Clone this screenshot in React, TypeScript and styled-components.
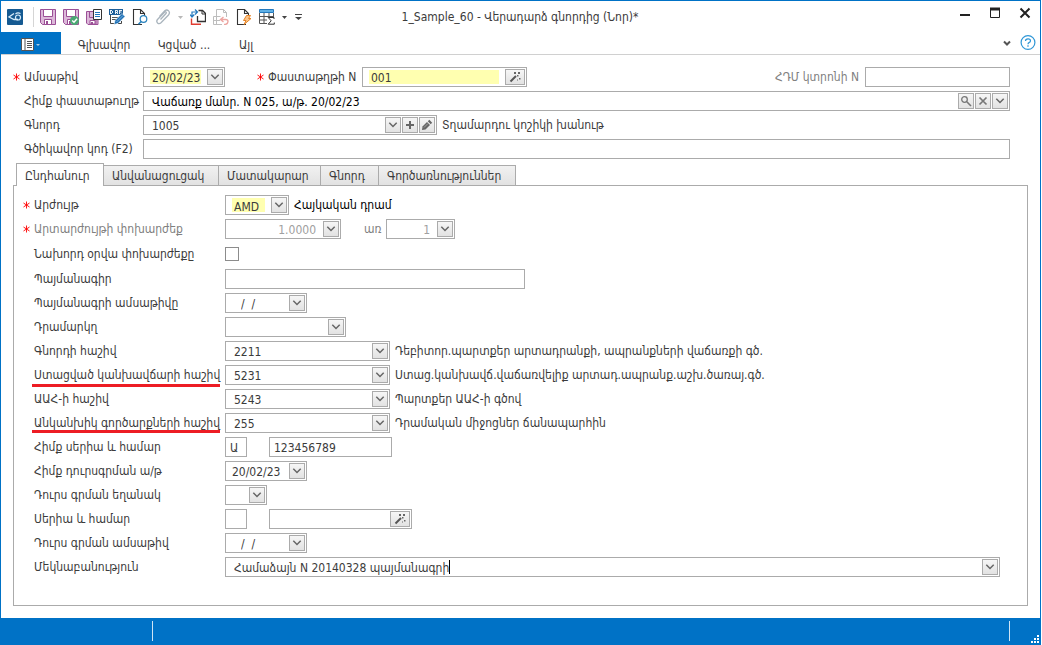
import React, { useRef } from "react";
import styled, { createGlobalStyle, css } from "styled-components";

const blue = "#0072c6";
const line = "#ababab";
const ink = "#3b3b3b";
const muted = "#808080";
const yellow = "#ffffb0";

const GlobalStyle = createGlobalStyle`
  * { box-sizing: border-box; }
  body { margin: 0; background: #fff; }
  body, button, input, select {
    font-family: "DejaVu Sans Condensed", "DejaVu Sans", sans-serif;
    font-size: 12px;
    line-height: 16px;
    color: ${ink};
  }
  button, input, select { margin: 0; padding: 0; border: 0; outline: 0; background: none; border-radius: 0; }
`;

const Window = styled.div`
  display: flex;
  flex-direction: column;
  min-height: 100vh;
  margin-right: 1px;
  border: 1px solid ${blue};
  border-bottom: 0;
`;

/* ---------- caption and ribbon ---------- */

const Caption = styled.header`
  display: grid;
  grid-template-columns: 1fr auto 1fr;
  align-items: center;
  height: 31px;
  padding: 0 7px 0 6px;
`;

const QuickBar = styled.div`
  display: flex;
  align-items: center;
  gap: 7px;
`;

const IconButton = styled.button<{ $w?: number }>`
  display: block;
  width: ${(p) => p.$w ?? 16}px;
  height: 16px;
  svg { display: block; }
`;

const BarDivider = styled.span`
  width: 1px;
  height: 20px;
  margin: 0 -1px 0 3px;
  background: #d5d5d5;
`;

const Title = styled.h1`
  margin: 0;
  font-size: 12px;
  font-weight: 400;
  line-height: 16px;
  white-space: nowrap;
`;

const WindowButtons = styled.div`
  display: flex;
  justify-content: flex-end;
  gap: 14px;
  margin-top: -7px;
`;

const Ribbon = styled.nav`
  display: flex;
  align-items: center;
  height: 23px;
  border-bottom: 1px solid #d0d0d0;
`;

const FileButton = styled.button`
  width: 60px;
  height: 22px;
  background: ${blue};
  svg { display: block; }
`;

const RibbonTab = styled.button<{ $w: number }>`
  width: ${(p) => p.$w}px;
  height: 22px;
  padding-top: 4px;
  text-align: center;
  white-space: nowrap;
`;

const RibbonTabs = styled.div`
  display: flex;
  flex: 1;
  padding-left: 4px;
`;

const RibbonTools = styled.div`
  display: flex;
  align-items: center;
  gap: 8px;
  padding-right: 4px;
`;

/* ---------- form parts ---------- */

const Rows = styled.div`
  display: flex;
  flex-direction: column;
  gap: 4px;
`;

const HeaderRows = styled(Rows)`
  padding: 12px 30px 4px 12px;
`;

const Row = styled.div<{ $h?: number }>`
  display: flex;
  align-items: center;
  height: ${(p) => p.$h ?? 20}px;
`;

const Label = styled.label<{ $w?: number; $muted?: boolean; $mark?: "near" | "below" }>`
  position: relative;
  flex: none;
  width: ${(p) => (p.$w ? `${p.$w}px` : "auto")};
  line-height: 20px;
  white-space: nowrap;
  color: ${(p) => (p.$muted ? muted : ink)};
  ${(p) =>
    p.$mark &&
    css`
      &::after {
        content: "";
        position: absolute;
        left: -2px;
        right: 5px;
        bottom: ${p.$mark === "near" ? 0 : -2}px;
        height: 3px;
        background: #ed1c24;
      }
    `}
`;

const Star = styled.span`
  flex: none;
  width: 11px;
  height: 20px;
  svg { display: block; margin-top: 6px; }
`;

const Box = styled.div<{ $w?: number }>`
  display: flex;
  align-items: center;
  gap: 1px;
  flex: ${(p) => (p.$w ? "none" : "1")};
  width: ${(p) => (p.$w ? `${p.$w}px` : "auto")};
  min-width: 0;
  height: 20px;
  padding: 1px;
  border: 1px solid ${line};
  background: #fff;
`;

const entry = css<{ $pad?: number; $muted?: boolean; $right?: boolean; $strong?: boolean }>`
  flex: 1;
  min-width: 0;
  width: 0;
  height: 16px;
  padding-top: 1px;
  padding-left: ${(p) => p.$pad ?? 7}px;
  padding-right: ${(p) => (p.$right ? 6 : 0)}px;
  color: ${(p) => (p.$strong ? "#000" : p.$muted ? "#a0a0a0" : ink)};
  text-align: ${(p) => (p.$right ? "right" : "left")};
  opacity: 1;
`;

const required = css`
  height: 14px;
  padding-left: 2px;
  margin: 0 5px;
  background: ${yellow};
`;

const Entry = styled.input<{ $pad?: number; $muted?: boolean; $right?: boolean; $strong?: boolean; $required?: boolean }>`
  ${entry}
  ${(p) => p.$required && required}
`;

const Picker = styled.select<{ $pad?: number; $muted?: boolean; $required?: boolean }>`
  appearance: none;
  ${entry}
  ${(p) => p.$required && required}
`;

const MiniButton = styled.button<{ $w?: number }>`
  flex: none;
  display: flex;
  align-items: center;
  justify-content: center;
  width: ${(p) => p.$w ?? 16}px;
  height: 16px;
  border: 1px solid ${line};
  background: linear-gradient(#f6f6f6, #e2e2e2);
`;

const Note = styled.span<{ $strong?: boolean }>`
  padding-left: 5px;
  line-height: 20px;
  white-space: nowrap;
  color: ${(p) => (p.$strong ? "#000" : ink)};
`;

const Gap = styled.span<{ $w: number }>`
  flex: none;
  width: ${(p) => p.$w}px;
`;

const Push = styled.span`
  flex: 1;
`;

const Tick = styled.input`
  appearance: none;
  width: 14px;
  height: 14px;
  margin: 0;
  border: 1px solid #8c8c8c;
  background: #fff;
`;

const Caret = styled.span`
  flex: none;
  width: 1px;
  height: 14px;
  margin-left: -1px;
  background: #000;
`;

const CommentText = styled(Entry)`
  flex: none;
  width: auto;
  field-sizing: content;
`;

/* ---------- tabs ---------- */

const TabStrip = styled.div`
  display: flex;
  align-items: flex-end;
  height: 22px;
  padding-left: 15px;
`;

const Tab = styled.button<{ $w: number; $active?: boolean }>`
  width: ${(p) => p.$w}px;
  height: ${(p) => (p.$active ? 23 : 20)}px;
  padding-top: ${(p) => (p.$active ? 2 : 0)}px;
  padding-left: 8px;
  text-align: left;
  white-space: nowrap;
  border: 1px solid ${line};
  border-bottom: 0;
  border-left-width: ${(p) => (p.$active ? 1 : 0)}px;
  background: ${(p) => (p.$active ? "#fff" : "linear-gradient(#f1f1f1, #e2e2e2)")};
  margin-bottom: ${(p) => (p.$active ? -1 : 0)}px;
  z-index: ${(p) => (p.$active ? 1 : 0)};
`;

const Panel = styled.section`
  flex: 1;
  margin: 0 12px 12px;
  padding: 9px 27px 28px 9px;
  border: 1px solid ${line};
`;

/* ---------- status bar ---------- */

const StatusBar = styled.footer`
  display: flex;
  justify-content: space-between;
  height: 27px;
  padding: 3px 0 4px 151px;
  background: ${blue};
`;

const StatusDivider = styled.span`
  width: 1px;
  height: 20px;
  background: #cfe4f5;
`;

const StatusEnd = styled.div`
  display: flex;
  align-items: flex-start;
  gap: 20px;
  svg { margin-top: 14px; }
`;

/* ---------- drawings ---------- */

const Svg = ({ w = 16, h = 16, children }: { w?: number; h?: number; children: React.ReactNode }) => (
  <svg width={w} height={h} viewBox={`0 0 ${w} ${h}`} fill="none" aria-hidden="true">
    {children}
  </svg>
);

const Chevron = () => (
  <Svg w={10} h={8}>
    <path d="M1.300 1.800L5 5.500L8.700 1.800" stroke="#666" strokeWidth="1.500" />
  </Svg>
);

const Wand = () => (
  <Svg w={12} h={12}>
    <path d="M1.500 10.500L7 5" stroke="#555" strokeWidth="2" />
    <path d="M5 1h2v2H5zM9 1h2v2H9zM8 4h1.500v1.500H8zM10 7h1.500v1.500H10zM8 8.500h1v1H8z" fill="#666" />
  </Svg>
);

const Lens = () => (
  <Svg w={12} h={12}>
    <circle cx="4.500" cy="4.500" r="2.800" stroke="#777" strokeWidth="1.300" />
    <path d="M6.800 6.800L11 11" stroke="#777" strokeWidth="1.600" />
  </Svg>
);

const Clear = () => (
  <Svg w={10} h={10}>
    <path d="M1.500 1.500L8.500 8.500M8.500 1.500L1.500 8.500" stroke="#777" strokeWidth="1.700" />
  </Svg>
);

const Plus = () => (
  <Svg w={10} h={10}>
    <path d="M5 1V9M1 5H9" stroke="#666" strokeWidth="2" />
  </Svg>
);

const Pencil = () => (
  <Svg w={12} h={12}>
    <path d="M1 11L1.500 7.500L6 3L9 6L4.500 10.500Z" fill="#666" />
    <path d="M6.800 2.300L8.300 .8L11.200 3.700L9.700 5.200Z" fill="#666" />
    <path d="M3 8.500L7 4.500" stroke="#bbb" strokeWidth=".7" />
  </Svg>
);

const Asterisk = () => (
  <Svg w={7} h={8}>
    <path d="M3.500 .5V7.500M.5 2L6.500 6M6.500 2L.5 6" stroke="#f00" strokeWidth=".9" />
  </Svg>
);

const purple = "#9b4f96";
const lilac = "#dcb8d9";
const Floppy = ({ small }: { small?: boolean }) => (
  <g>
    <path d={small ? "M.5 2.500H8V8H12V15.500H2L.5 14Z" : "M.5 .5H15.500V15.500H2.500L.5 13.500Z"} fill={lilac} stroke={purple} />
    <path d={small ? "M3.500 2.500V8.500H10V15" : "M3.500 .5H12.500V7.500H3.500Z"} fill={small ? "none" : "#fff"} stroke={purple} />
    <path d={small ? "M4 11.500H9V15H4Z" : "M4.500 10.500H11.500V15.500H4.500Z"} fill="#fff" stroke={purple} />
    <path d={small ? "M5 13H7V15H5Z" : "M6 12H8V15H6Z"} fill={purple} />
  </g>
);

const Page = () => (
  <path d="M10 15.500H1.500V.5H8.500L12.500 4.500V8M8.500 .5V4.500H12.500" stroke="#333" strokeWidth="1.100" fill="#fff" />
);

const SmallArrow = ({ tone = "#444" }: { tone?: string }) => (
  <Svg w={5} h={16}>
    <path d="M0 7H5L2.500 10Z" fill={tone} />
  </Svg>
);

const quickActions: { name: string; w?: number; icon: React.ReactNode }[] = [
  { name: "Save", icon: <Svg><Floppy /></Svg> },
  {
    name: "Save and approve",
    icon: (
      <Svg>
        <Floppy />
        <circle cx="11.500" cy="11.500" r="4.500" fill="#4aa873" />
        <path d="M9.200 11.500L11 13.300L14 9.800" stroke="#fff" strokeWidth="1.400" />
      </Svg>
    ),
  },
  {
    name: "Save and new",
    icon: (
      <Svg>
        <Floppy small />
        <path d="M7.500 .5H15.500V10.500H7.500Z" fill="#fff" stroke="#333" />
        <path d="M9 3.500H14M9 5.500H14M9 7.500H14" stroke="#2479bd" />
      </Svg>
    ),
  },
  {
    name: "Save draft",
    icon: (
      <Svg>
        <path d="M1.500 6V14.500H7M12.500 12V14.500H9" stroke="#444" />
        <path d="M0 0H14V6H0Z" fill="#1e5f99" />
        <path d="M1.500 1V5M1.500 1.500H3M1.500 4.500H3M3.500 2V4M6.500 1V5M7 1.500H8.500V3.500H7M8.500 4V5M10.500 1V5M11 1.500H13M11 3H12.500" stroke="#fff" strokeWidth=".9" />
        <path d="M3 8.500H9M3 10.500H7" stroke="#555" />
        <path d="M5 15.500L6 11.500L13 4.500L16 7.500L9 14.500Z" fill="#1e70b5" stroke="#fff" strokeWidth=".6" />
        <path d="M7.500 13L14 6.500" stroke="#8fc1e8" strokeWidth=".8" />
      </Svg>
    ),
  },
  {
    name: "Preview",
    icon: (
      <Svg>
        <Page />
        <circle cx="11.500" cy="10" r="3.300" fill="#fff" stroke="#2b83bd" strokeWidth="1.200" />
        <path d="M9.200 12.500L6.500 15.300" stroke="#2b83bd" strokeWidth="1.600" />
      </Svg>
    ),
  },
  {
    name: "Attach",
    icon: (
      <Svg>
        <path d="M5.500 10.500L11 4.500C12 3.400 10.500 2.200 9.500 3.200L2.500 10.500C.5 13 3.500 16 6 13.800L13.500 6C16 3 12.500 -.5 9.800 1.800L4.500 7.500" stroke="#a9b4bd" strokeWidth="1.300" />
      </Svg>
    ),
  },
  { name: "Attach options", w: 5, icon: <SmallArrow tone="#b8b8b8" /> },
  {
    name: "Copy document",
    icon: (
      <Svg>
        <path d="M1.500 9.500V15.300H11" stroke="#e03c31" strokeWidth="1.400" />
        <path d="M8.500 1.500H12.500L15.500 4.500V12.500H7.500V7" stroke="#333" strokeWidth="1.300" />
        <path d="M12 1.500V5H15.500" stroke="#333" />
        <path d="M2 8V3H7M5 .5L7.500 3L5 5.500M0 5.500L2 8L4.300 5.500" stroke="#2479bd" strokeWidth="1.200" />
      </Svg>
    ),
  },
  {
    name: "Undo posting",
    icon: (
      <Svg>
        <path d="M3.500 7V.5H10.500L13.500 3.500V8M10.500 .5V3.500H13.500M.5 7.500H7.500M.5 7.500V15.500H9M.5 11.500H7M3.500 8V15" stroke="#bdbdbd" />
        <path d="M10.500 8L7.500 10.500L10.500 13M8 10.500H12.500Q15 10.500 15 12.500T12.500 15.500H11" stroke="#eda6a2" strokeWidth="1.400" />
      </Svg>
    ),
  },
  {
    name: "Run operation",
    icon: (
      <Svg>
        <Page />
        <path d="M10.500 6.500H14.500L12.500 9.500H15L8 15.500L10 11.500H7.500Z" fill="#fbc489" stroke="#e58428" strokeWidth="1" />
      </Svg>
    ),
  },
  {
    name: "Totals",
    icon: (
      <Svg>
        <path d="M.5 4V14.500H8M.5 7.500H14.500M.5 11H8M5 4V14.500M10 4V8M14.500 4V8" stroke="#555" />
        <path d="M.5 .5H14.500V3.500H.5Z" fill="#5fb0e5" stroke="#2479bd" />
        <path d="M15 10V8.500H9.200L12.200 11.800L9.200 15.200H15.300V13.500" stroke="#333" />
      </Svg>
    ),
  },
  { name: "Totals options", w: 5, icon: <SmallArrow /> },
  {
    name: "Customize toolbar",
    w: 8,
    icon: (
      <Svg w={8} h={16}>
        <path d="M1 8H8L4.500 11Z" fill="#444" />
        <path d="M1 5.500H8" stroke="#444" />
      </Svg>
    ),
  },
];

/* ---------- composed controls ---------- */

type FieldProps = {
  id: string;
  value?: string;
  w?: number;
  pad?: number;
  muted?: boolean;
  right?: boolean;
  req?: boolean;
};

const TextField = ({ id, value = "", w, pad = 3 }: FieldProps) => (
  <Box $w={w}>
    <Entry id={id} defaultValue={value} $pad={pad} />
  </Box>
);

const DropField = ({ id, value = "", w, pad, muted: m, right, req }: FieldProps) => (
  <Box $w={w}>
    <Entry id={id} defaultValue={value} $pad={pad} $muted={m} $right={right} $required={req} disabled={m} />
    <MiniButton type="button" aria-label="Open">
      <Chevron />
    </MiniButton>
  </Box>
);

const SelectField = ({ id, value = "", w, req }: FieldProps) => {
  const ref = useRef<HTMLSelectElement>(null);
  return (
    <Box $w={w}>
      <Picker id={id} ref={ref} defaultValue={value} $required={req}>
        <option value={value}>{value}</option>
      </Picker>
      <MiniButton type="button" aria-label="Open" onClick={() => ref.current?.showPicker()}>
        <Chevron />
      </MiniButton>
    </Box>
  );
};

const WandField = ({ id, value = "", w, req }: FieldProps) => (
  <Box $w={w}>
    <Entry id={id} defaultValue={value} $required={req} />
    <MiniButton type="button" $w={20} aria-label="Generate">
      <Wand />
    </MiniButton>
  </Box>
);

const Mark = ({ on }: { on?: boolean }) => <Star>{on && <Asterisk />}</Star>;

const accounts = [
  { id: "acc-customer", label: "Գնորդի հաշիվ", code: "2211", note: "Դեբիտոր.պարտքեր արտադրանքի, ապրանքների վաճառքի գծ." },
  { id: "acc-advance", label: "Ստացված կանխավճարի հաշիվ", code: "5231", note: "Ստաց.կանխավճ.վաճառվելիք արտադ.ապրանք.աշխ.ծառայ.գծ.", mark: "below" as const },
  { id: "acc-vat", label: "ԱԱՀ-ի հաշիվ", code: "5243", note: "Պարտքեր ԱԱՀ-ի գծով" },
  { id: "acc-cashless", label: "Անկանխիկ գործարքների հաշիվ", code: "255", note: "Դրամական միջոցներ ճանապարհին", mark: "near" as const },
];

const tabs = [
  { name: "Ընդհանուր", w: 88 },
  { name: "Անվանացուցակ", w: 115 },
  { name: "Մատակարար", w: 102 },
  { name: "Գնորդ", w: 58 },
  { name: "Գործառնություններ", w: 137 },
];

type PanelRowProps = {
  id: string;
  label: string;
  star?: boolean;
  muted?: boolean;
  mark?: "near" | "below";
  h?: number;
  children: React.ReactNode;
};

const PanelRow = ({ id, label, star, muted: m, mark, h, children }: PanelRowProps) => (
  <Row $h={h}>
    <Mark on={star} />
    <Label htmlFor={id} $w={191} $muted={m} $mark={mark}>
      {label}
    </Label>
    {children}
  </Row>
);

export default function App() {
  return (
    <>
      <GlobalStyle />
      <Window>
        <Caption>
          <QuickBar>
            <Svg>
              <rect width="16" height="16" rx="1" fill="#155a92" />
              <path d="M7 4.500L2 8L7 10.500H11" stroke="#d6ebfa" strokeWidth="1.300" />
              <circle cx="11" cy="8.500" r="2.500" stroke="#d6ebfa" strokeWidth="1.200" />
              <path d="M8.500 5Q10.500 3 13.500 4.500" stroke="#d6ebfa" strokeWidth="1.100" />
            </Svg>
            <BarDivider />
            {quickActions.map((a) => (
              <IconButton key={a.name} type="button" aria-label={a.name} $w={a.w}>
                {a.icon}
              </IconButton>
            ))}
          </QuickBar>
          <Title>1_Sample_60 - Վերադարձ գնորդից (Նոր)*</Title>
          <WindowButtons>
            <IconButton type="button" aria-label="Minimize">
              <Svg><path d="M3 10H13" stroke="#222" strokeWidth="2" /></Svg>
            </IconButton>
            <IconButton type="button" aria-label="Maximize">
              <Svg>
                <path d="M3.500 3.500H12.500V12.500H3.500Z" stroke="#222" />
                <path d="M3 4H13" stroke="#222" strokeWidth="3" />
              </Svg>
            </IconButton>
            <IconButton type="button" aria-label="Close">
              <Svg><path d="M3.500 3.500L12.500 12.500M12.500 3.500L3.500 12.500" stroke="#222" strokeWidth="2" /></Svg>
            </IconButton>
          </WindowButtons>
        </Caption>

        <Ribbon>
          <FileButton type="button" aria-label="File">
            <Svg w={60} h={22}>
              <path d="M20.500 6.500H32.500V18.500H20.500Z" fill="#fff" stroke="#555" />
              <path d="M24 6V19" stroke="#555" />
              <path d="M26 9.500H31M26 11.500H31M26 13.500H31M26 15.500H31" stroke="#555" />
              <path d="M35 12H39L37 14Z" fill="#a8cbe6" />
            </Svg>
          </FileButton>
          <RibbonTabs>
            <RibbonTab type="button" $w={78}>Գլխավոր</RibbonTab>
            <RibbonTab type="button" $w={82}>Կցված ...</RibbonTab>
            <RibbonTab type="button" $w={42}>Այլ</RibbonTab>
          </RibbonTabs>
          <RibbonTools>
            <IconButton type="button" aria-label="Collapse ribbon" $w={10}>
              <Svg w={10} h={16}><path d="M2 6.500L5 9.500L8 6.500" stroke="#555" strokeWidth="2" /></Svg>
            </IconButton>
            <IconButton type="button" aria-label="Help">
              <Svg>
                <circle cx="8" cy="7.500" r="6.900" stroke="#2e96d6" strokeWidth="1.200" />
                <path d="M5.500 6Q5.500 3.800 8 3.800T10.500 5.800Q10.500 7 9 7.600Q8 8 8 9.300" stroke="#2e96d6" strokeWidth="1.200" />
                <path d="M8 10.300V11.700" stroke="#2e96d6" strokeWidth="1.300" />
              </Svg>
            </IconButton>
          </RibbonTools>
        </Ribbon>

        <HeaderRows>
          <Row>
            <Mark on />
            <Label htmlFor="date" $w={119}>Ամսաթիվ</Label>
            <DropField id="date" value="20/02/23" w={82} req />
            <Gap $w={32} />
            <Mark on />
            <Label htmlFor="number" $w={94}>Փաստաթղթի N</Label>
            <WandField id="number" value="001" w={165} req />
            <Push />
            <Label htmlFor="receipt" $muted>ՀԴՄ կտրոնի N</Label>
            <Gap $w={6} />
            <TextField id="receipt" w={145} />
          </Row>
          <Row>
            <Mark />
            <Label htmlFor="basis" $w={119}>Հիմք փաստաթուղթ</Label>
            <Box>
              <Entry id="basis" defaultValue="Վաճառք մանր. N 025, ա/թ. 20/02/23" $strong />
              <MiniButton type="button" aria-label="Find"><Lens /></MiniButton>
              <MiniButton type="button" aria-label="Clear"><Clear /></MiniButton>
              <MiniButton type="button" aria-label="Open"><Chevron /></MiniButton>
            </Box>
          </Row>
          <Row>
            <Mark />
            <Label htmlFor="customer" $w={119}>Գնորդ</Label>
            <Box $w={294}>
              <Entry id="customer" defaultValue="1005" />
              <MiniButton type="button" aria-label="Open"><Chevron /></MiniButton>
              <MiniButton type="button" aria-label="Add"><Plus /></MiniButton>
              <MiniButton type="button" aria-label="Edit"><Pencil /></MiniButton>
            </Box>
            <Note>Տղամարդու կոշիկի խանութ</Note>
          </Row>
          <Row>
            <Mark />
            <Label htmlFor="barcode" $w={119}>Գծիկավոր կոդ (F2)</Label>
            <TextField id="barcode" />
          </Row>
        </HeaderRows>

        <TabStrip role="tablist">
          {tabs.map((t, i) => (
            <Tab key={t.name} type="button" role="tab" aria-selected={i === 0} $w={t.w} $active={i === 0}>
              {t.name}
            </Tab>
          ))}
        </TabStrip>

        <Panel>
          <Rows>
            <PanelRow id="currency" label="Արժույթ" star>
              <SelectField id="currency" value="AMD" w={64} req />
              <Note $strong>Հայկական դրամ</Note>
            </PanelRow>
            <PanelRow id="rate" label="Արտարժույթի փոխարժեք" star muted>
              <DropField id="rate" value="1.0000" w={116} muted right />
              <Gap $w={23} />
              <Label htmlFor="per" $w={22} $muted>առ</Label>
              <DropField id="per" value="1" w={69} muted right />
            </PanelRow>
            <PanelRow id="prev-rate" label="Նախորդ օրվա փոխարժեքը" h={22}>
              <Tick id="prev-rate" type="checkbox" />
            </PanelRow>
            <PanelRow id="contract" label="Պայմանագիր">
              <TextField id="contract" w={300} />
            </PanelRow>
            <PanelRow id="contract-date" label="Պայմանագրի ամսաթիվը">
              <DropField id="contract-date" value="/  /" w={82} pad={14} />
            </PanelRow>
            <PanelRow id="cash-desk" label="Դրամարկղ">
              <SelectField id="cash-desk" w={121} />
            </PanelRow>
            {accounts.map((a) => (
              <PanelRow key={a.id} id={a.id} label={a.label} mark={a.mark}>
                <SelectField id={a.id} value={a.code} w={165} />
                <Note>{a.note}</Note>
              </PanelRow>
            ))}
            <PanelRow id="basis-series" label="Հիմք սերիա և համար">
              <TextField id="basis-series" value="Ա" w={22} />
              <Gap $w={22} />
              <TextField id="basis-number" value="123456789" w={123} />
            </PanelRow>
            <PanelRow id="basis-date" label="Հիմք դուրսգրման ա/թ">
              <DropField id="basis-date" value="20/02/23" w={82} pad={5} />
            </PanelRow>
            <PanelRow id="issue-method" label="Դուրս գրման եղանակ">
              <SelectField id="issue-method" w={42} />
            </PanelRow>
            <PanelRow id="series" label="Սերիա և համար">
              <TextField id="series" w={22} />
              <Gap $w={22} />
              <WandField id="series-number" w={143} />
            </PanelRow>
            <PanelRow id="issue-date" label="Դուրս գրման ամսաթիվ">
              <DropField id="issue-date" value="/  /" w={82} pad={14} />
            </PanelRow>
            <PanelRow id="comment" label="Մեկնաբանություն">
              <Box>
                <CommentText id="comment" defaultValue="Համաձայն N 20140328 պայմանագրի" />
                <Caret />
                <Push />
                <MiniButton type="button" aria-label="Open"><Chevron /></MiniButton>
              </Box>
            </PanelRow>
          </Rows>
        </Panel>

        <StatusBar>
          <StatusDivider />
          <StatusEnd>
            <StatusDivider />
            <Svg w={10} h={9}>
              <path d="M1 6h2v2H1zM4 6h2v2H4zM7 6h2v2H7zM4 3h2v2H4zM7 3h2v2H7zM7 0h2v2H7z" fill="#fff" />
            </Svg>
          </StatusEnd>
        </StatusBar>
      </Window>
    </>
  );
}
